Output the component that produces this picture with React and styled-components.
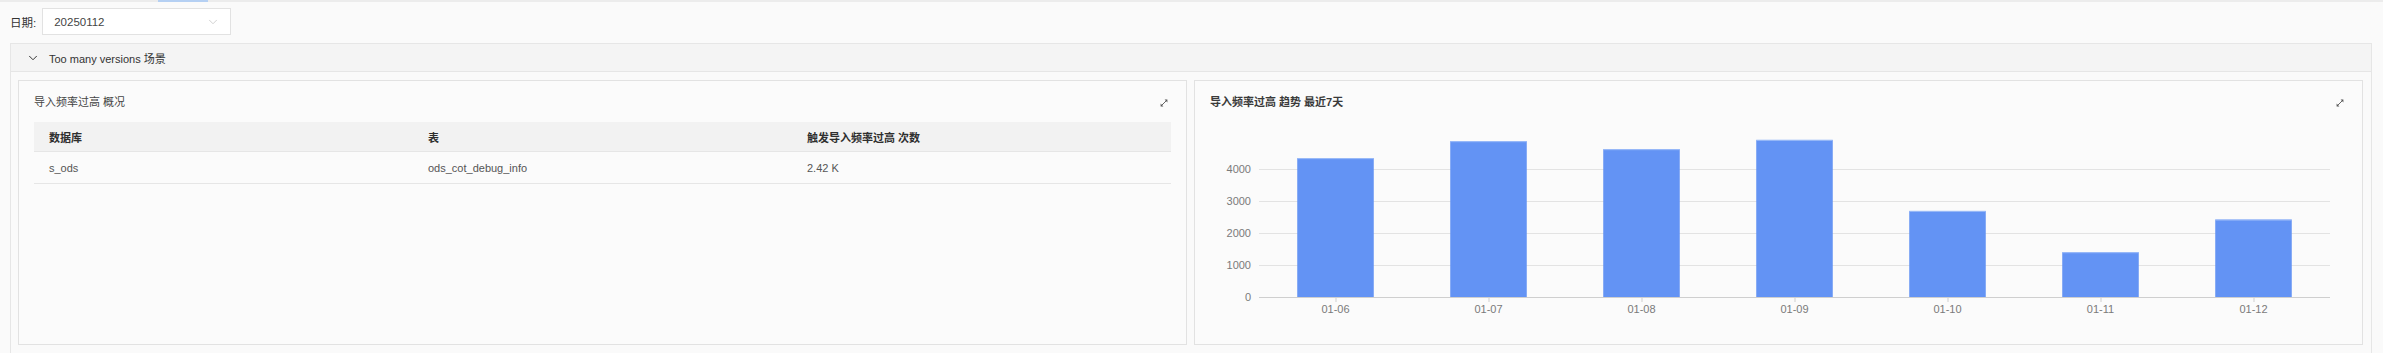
import React from "react";
import styled, { createGlobalStyle } from "styled-components";
import { ChevronDown } from "lucide-react";

const GlobalStyle = createGlobalStyle`
  html, body {
    margin: 0;
    padding: 0;
    background: #fafafa;
    font-family: "Liberation Sans", "Noto Sans CJK SC", sans-serif;
    font-size: 11px;
    color: #333;
  }
`;

const Page = styled.div`
  display: flex;
  flex-direction: column;
  padding: 0 11px 0 10px;
`;

const TabStrip = styled.div`
  height: 2px;
  margin: 0 -11px 0 -10px;
  background: #ececec;
  display: flex;
`;

const ActiveTab = styled.div`
  margin-left: 158px;
  width: 50px;
  background: #b5d0f3;
`;

const FilterRow = styled.div`
  display: flex;
  align-items: center;
  gap: 6px;
  padding-top: 6px;
  height: 27px;
`;

const Label = styled.span`
  color: #333;
  font-size: 11.5px;
`;

const Select = styled.div`
  box-sizing: border-box;
  width: 189px;
  height: 27px;
  border: 1px solid #e2e2e2;
  background: #fff;
  display: flex;
  align-items: center;
  justify-content: space-between;
  padding: 0 10px 0 11px;
  font-size: 11.5px;
  color: #444;
`;

const Panel = styled.div`
  margin-top: 8px;
  border: 1px solid #e6e6e6;
  border-bottom: none;
`;

const PanelHeader = styled.div`
  height: 27px;
  display: flex;
  align-items: center;
  gap: 9px;
  padding-left: 15px;
  background: #f4f4f4;
  border-bottom: 1px solid #e6e6e6;
  color: #333;
  font-size: 11px;
`;

const PanelBody = styled.div`
  display: grid;
  grid-template-columns: 1fr 1fr;
  gap: 7px;
  padding: 8px 8px 8px 7px;
  background: #fafafa;
`;

const Card = styled.div`
  position: relative;
  border: 1px solid #e2e2e2;
  background: #fbfbfb;
  padding: 14px 15px 14px 15px;
  display: flex;
  flex-direction: column;
`;

const CardTitle = styled.div`
  height: 14px;
  line-height: 14px;
  font-size: 11px;
  color: ${(p) => (p.$strong ? "#3a3a3a" : "#444")};
  font-weight: ${(p) => (p.$strong ? 600 : 400)};
`;

const ExpandBtn = styled.div`
  position: absolute;
  top: 18px;
  right: 18px;
  width: 8px;
  height: 8px;
  display: flex;
`;

const Table = styled.div`
  margin-top: 13px;
  display: flex;
  flex-direction: column;
`;

const Row = styled.div`
  display: grid;
  grid-template-columns: 1fr 1fr 1fr;
  align-items: center;
  height: ${(p) => (p.$head ? "29px" : "31px")};
  background: ${(p) => (p.$head ? "#f2f2f2" : "transparent")};
  border-bottom: 1px solid #e6e6e6;
`;

const Cell = styled.div`
  padding: 0 15px;
  font-size: 11px;
  color: ${(p) => (p.$head ? "#2f2f2f" : "#555")};
  font-weight: ${(p) => (p.$head ? 600 : 400)};
`;

const Chart = styled.svg`
  display: block;
  margin-top: 11px;
  width: 100%;
  height: 210px;
`;

const ExpandIcon = () => (
  <svg width="8" height="8" viewBox="0 0 8 8">
    <line x1="1.5" y1="6.5" x2="6.5" y2="1.5" stroke="#555" strokeWidth="0.9" />
    <path d="M4.6 0.6 L7.4 0.6 L7.4 3.4 Z" fill="#555" />
    <path d="M0.6 4.6 L0.6 7.4 L3.4 7.4 Z" fill="#555" />
  </svg>
);

const data = [
  { day: "01-06", value: 4340 },
  { day: "01-07", value: 4870 },
  { day: "01-08", value: 4620 },
  { day: "01-09", value: 4910 },
  { day: "01-10", value: 2690 },
  { day: "01-11", value: 1400 },
  { day: "01-12", value: 2420 },
];

const TrendChart = () => {
  const left = 49;
  const band = 153;
  const right = left + band * data.length;
  const base = 177;
  const k = 32 / 1000;
  const ticks = [0, 1000, 2000, 3000, 4000];
  return (
    <Chart>
      {ticks.map((t) => (
        <g key={t}>
          <line
            x1={left}
            x2={right}
            y1={base - t * k + 0.5}
            y2={base - t * k + 0.5}
            stroke={t === 0 ? "#cfcfcf" : "#e3e3e3"}
            strokeWidth="1"
          />
          <text
            x={left - 8}
            y={base - t * k + 4}
            textAnchor="end"
            fontSize="11"
            fill="#7a7a7a"
            fontFamily="Liberation Sans, sans-serif"
          >
            {t}
          </text>
        </g>
      ))}
      {data.map((d, i) => {
        const cx = left + band * i + band / 2;
        const h = d.value * k;
        return (
          <g key={d.day}>
            <rect
              x={cx - band / 4}
              y={base - h}
              width={band / 2}
              height={h}
              fill="#6393f4"
            />
            <line
              x1={cx - band / 4}
              x2={cx + band / 4}
              y1={base - h + 0.5}
              y2={base - h + 0.5}
              stroke="#9dbcf8"
              strokeWidth="1"
            />
            <line x1={cx + 0.5} x2={cx + 0.5} y1={base} y2={base + 5} stroke="#cfcfcf" />
            <text
              x={cx}
              y={base + 16}
              textAnchor="middle"
              fontSize="11"
              fill="#7a7a7a"
              fontFamily="Liberation Sans, sans-serif"
            >
              {d.day}
            </text>
          </g>
        );
      })}
    </Chart>
  );
};

const App = () => {
  return (
    <>
      <GlobalStyle />
      <Page>
        <TabStrip>
          <ActiveTab />
        </TabStrip>
        <FilterRow>
          <Label>日期:</Label>
          <Select>
            <span>20250112</span>
            <ChevronDown size={14} color="#c4c4c4" strokeWidth={1.3} />
          </Select>
        </FilterRow>
        <Panel>
          <PanelHeader>
            <ChevronDown size={14} color="#333" strokeWidth={1.7} />
            <span>Too many versions 场景</span>
          </PanelHeader>
          <PanelBody>
            <Card>
              <CardTitle>导入频率过高 概况</CardTitle>
              <ExpandBtn>
                <ExpandIcon />
              </ExpandBtn>
              <Table>
                <Row $head>
                  <Cell $head>数据库</Cell>
                  <Cell $head>表</Cell>
                  <Cell $head>触发导入频率过高 次数</Cell>
                </Row>
                <Row>
                  <Cell>s_ods</Cell>
                  <Cell>ods_cot_debug_info</Cell>
                  <Cell>2.42 K</Cell>
                </Row>
              </Table>
            </Card>
            <Card>
              <CardTitle $strong>导入频率过高 趋势 最近7天</CardTitle>
              <ExpandBtn>
                <ExpandIcon />
              </ExpandBtn>
              <TrendChart />
            </Card>
          </PanelBody>
        </Panel>
      </Page>
    </>
  );
};

export default App;
